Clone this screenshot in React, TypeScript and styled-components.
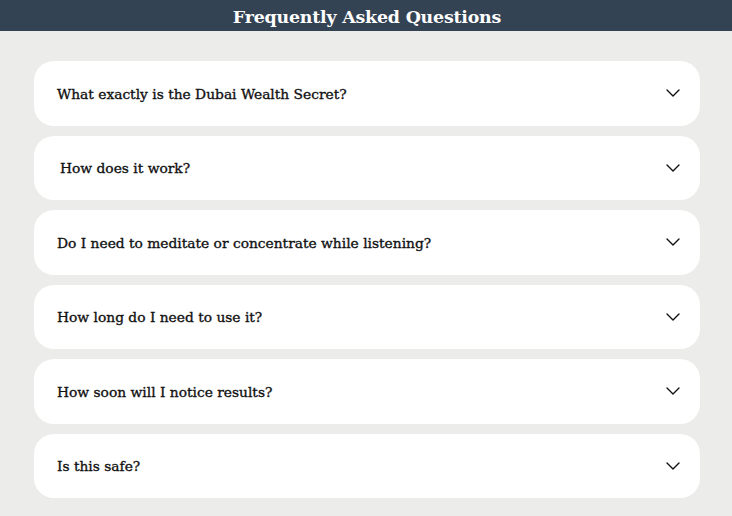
import React from "react";
import styled, { createGlobalStyle } from "styled-components";
import { ChevronDown } from "lucide-react";

const Global = createGlobalStyle`
  html, body { margin: 0; padding: 0; background: #ecedea; }
  body { font-family: "DejaVu Serif", serif; }
`;

const Page = styled.div`
  display: flex;
  flex-direction: column;
  min-height: 516px;
  background: #ecedea;
`;

const Header = styled.header`
  height: 31px;
  box-sizing: border-box;
  padding-top: 2px;
  background: #344354;
  display: flex;
  align-items: center;
  justify-content: center;
`;

const Title = styled.h1`
  margin: 0 0 0 2px;
  color: #ffffff;
  font-family: "DejaVu Serif", serif;
  font-weight: 700;
  font-size: 17.4px;
  letter-spacing: -0.2px;
`;

const List = styled.div`
  display: flex;
  flex-direction: column;
  gap: 10px;
  padding: 30px 32px 18px 34px;
`;

const Item = styled.div<{ $indent?: number }>`
  height: 64.5px;
  box-sizing: border-box;
  background: #ffffff;
  border-radius: 20px;
  display: flex;
  align-items: center;
  justify-content: space-between;
  padding: 0 15px 0 ${(p) => 23 + (p.$indent ?? 0)}px;
`;

const Question = styled.span`
  font-family: "DejaVu Serif", serif;
  font-weight: 400;
  font-size: 13.8px;
  color: #111111;
  -webkit-text-stroke: 0.35px #111111;
  padding-top: 1px;
`;

const Icon = styled(ChevronDown)`
  color: #111111;
  flex-shrink: 0;
`;

const questions: { q: string; indent?: number }[] = [
  { q: "What exactly is the Dubai Wealth Secret?" },
  { q: "How does it work?", indent: 3 },
  { q: "Do I need to meditate or concentrate while listening?" },
  { q: "How long do I need to use it?" },
  { q: "How soon will I notice results?" },
  { q: "Is this safe?" },
];

export default function App() {
  return (
    <Page>
      <Global />
      <Header>
        <Title>Frequently Asked Questions</Title>
      </Header>
      <List>
        {questions.map((item) => (
          <Item key={item.q} $indent={item.indent}>
            <Question>{item.q}</Question>
            <Icon size={24} strokeWidth={1.4} />
          </Item>
        ))}
      </List>
    </Page>
  );
}
